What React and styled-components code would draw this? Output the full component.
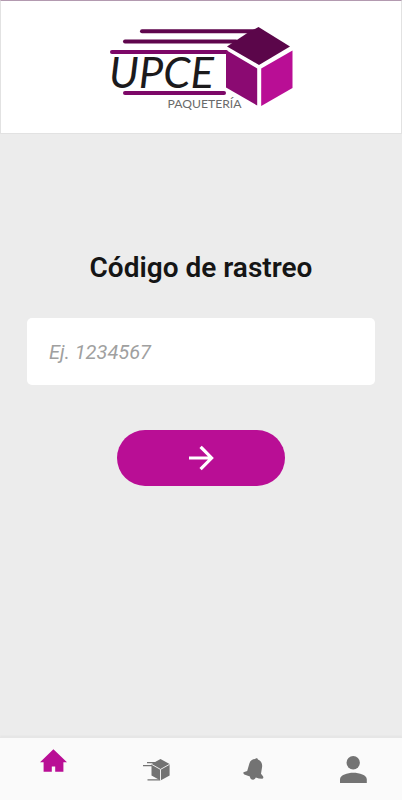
import React from 'react';
import styled, { createGlobalStyle } from 'styled-components';

const GlobalStyle = createGlobalStyle`
  * {
    box-sizing: border-box;
  }
  body {
    margin: 0;
    background-color: #ececec;
    font-family: 'Roboto', sans-serif;
  }
`;

const Screen = styled.div`
  display: flex;
  flex-direction: column;
  width: 402px;
  height: 800px;
  background-color: #ececec;
  overflow: hidden;
`;
const Header = styled.header`
  display: flex;
  justify-content: center;
  height: 134px;
  padding-top: 24px;
  background-color: #fff;
  border: 1px solid #e2e2e2;
  border-top-color: #b39ab0;
`;
const Main = styled.main`
  flex: 1;
  display: flex;
  flex-direction: column;
  align-items: center;
  padding: 115px 27px 0;
`;
const Title = styled.h1`
  margin: 0;
  color: #151515;
  font-size: 28px;
  font-weight: 600;
  line-height: 37px;
  white-space: nowrap;
`;
const CodeInput = styled.input`
  width: 348px;
  height: 67px;
  margin-top: 32px;
  padding: 0 22px;
  border: 0;
  border-radius: 5px;
  outline: none;
  background-color: #fff;
  color: #333;
  font-family: 'Roboto', sans-serif;
  font-size: 20px;
  &::placeholder {
    color: #a0a0a0;
    font-style: italic;
    opacity: 1;
  }
`;
const SubmitButton = styled.button`
  display: flex;
  align-items: center;
  justify-content: center;
  width: 168px;
  height: 56px;
  margin-top: 45px;
  padding: 0;
  border: 0;
  border-radius: 28px;
  background-color: #b90e95;
  color: #fff;
`;
const Nav = styled.nav`
  display: grid;
  grid-template-columns: repeat(4, 1fr);
  height: 63px;
  border-top: 1px solid #e6e6e6;
  background-color: #fafafa;
  box-shadow: 0 -1px 2px rgba(0, 0, 0, 0.04);
`;
const NavItem = styled.a`
  display: flex;
  justify-content: center;
  padding-top: ${props => props.$top}px;
  padding-left: ${props => props.$left || 0}px;
  color: ${props => (props.$active ? '#b90e95' : '#737373')};
`;
const Wordmark = styled.text`
  font-family: 'Lato', sans-serif;
  font-size: 43px;
  font-style: italic;
  fill: #1c1a1c;
`;
const Tagline = styled.text`
  font-family: 'Lato', sans-serif;
  font-size: 12px;
  fill: #6a6a6a;
`;

function Logo() {
  return (
    <svg width="184" height="90" viewBox="109 25 184 90">
      <g strokeWidth="4" strokeLinecap="round">
        <path d="M142 31.3H254" stroke="#5f064d" />
        <path d="M125 41.6H236" stroke="#5f064d" />
        <path d="M112 52H226" stroke="#7d0868" />
        <path d="M125 93H224" stroke="#7d0868" />
      </g>
      <path d="M247 33.3L258.5 27L290 46.5L259 65L227 46.5Z" fill="#5b064a" />
      <path d="M226 50L257.2 68.5V105.5L226 87.5Z" fill="#8b0a72" />
      <path d="M261.2 68.5L292.5 50.5V88L261.2 106Z" fill="#b90e95" />
      <path d="M226 47.9L259 67L292 47.9" fill="none" stroke="#fff" strokeWidth="2.2" />
      <Wordmark x="109" y="87.5" textLength="105" lengthAdjust="spacingAndGlyphs">
        UPCE
      </Wordmark>
      <Tagline x="167.5" y="108.3" textLength="74" lengthAdjust="spacingAndGlyphs">
        PAQUETERÍA
      </Tagline>
    </svg>
  );
}

function ArrowIcon() {
  return (
    <svg width="26" height="26" viewBox="0 0 26 26" fill="none">
      <path
        d="M2.6 13H22.8M13.7 2.9L23.6 13L13.7 23.1"
        stroke="currentColor"
        strokeWidth="3.2"
        strokeLinecap="square"
      />
    </svg>
  );
}

function HomeIcon() {
  return (
    <svg width="27" height="23" viewBox="0 0 27 23" fill="currentColor">
      <path d="M13.4 0.2L27 13.2H23.4V22.7H15.2V17.4H11.8V22.7H3.6V13.2H0Z" />
    </svg>
  );
}

function PackageIcon() {
  return (
    <svg width="27" height="22" viewBox="0 0 27 22">
      <path d="M4 3.7H12M0 6.7H10M4.5 20.8H17" stroke="currentColor" strokeWidth="1.2" />
      <path d="M17.5 0L26.6 4.9V16.5L17.5 21.6L8.5 16.5V4.9Z" fill="currentColor" />
      <path d="M8.5 5.3L17.5 10.4L26.6 5.3M17.5 10.4V21.6" fill="none" stroke="#fafafa" strokeWidth="0.9" />
    </svg>
  );
}

function BellIcon() {
  return (
    <svg width="21" height="24" viewBox="0 0 21 24" fill="currentColor">
      <path d="M12.2 1.1C12.4-.2 15-.1 14.9 1.6C18 3 19.6 5.6 19.1 9L18 15.8L20 18.2Q21 20 19.3 20.8L15.8 20.4L12.8 19.6C11.8 22.8 7.2 22.4 6.9 18.4L1.3 16.5Q0 15.7.5 14.2L4.2 13L6.3 5.7C7.3 2.7 9.3 1.1 12.2 1.1Z" />
    </svg>
  );
}

function UserIcon() {
  return (
    <svg width="27" height="27" viewBox="0 0 27 27" fill="currentColor">
      <circle cx="13.2" cy="6.7" r="6.7" />
      <path d="M0 27V23.5C0 19 7.5 16.8 13.4 16.8S26.8 19 26.8 23.5V27Z" />
    </svg>
  );
}

function App() {
  return (
    <>
      <GlobalStyle />
      <Screen>
        <Header>
          <Logo />
        </Header>
        <Main>
          <Title>Código de rastreo</Title>
          <CodeInput placeholder="Ej. 1234567" />
          <SubmitButton aria-label="Buscar">
            <ArrowIcon />
          </SubmitButton>
        </Main>
        <Nav>
          <NavItem $active $top={11} $left={6}>
            <HomeIcon />
          </NavItem>
          <NavItem $top={21} $left={11}>
            <PackageIcon />
          </NavItem>
          <NavItem $top={20} $left={4}>
            <BellIcon />
          </NavItem>
          <NavItem $top={18} $left={3}>
            <UserIcon />
          </NavItem>
        </Nav>
      </Screen>
    </>
  );
}

export default App;
